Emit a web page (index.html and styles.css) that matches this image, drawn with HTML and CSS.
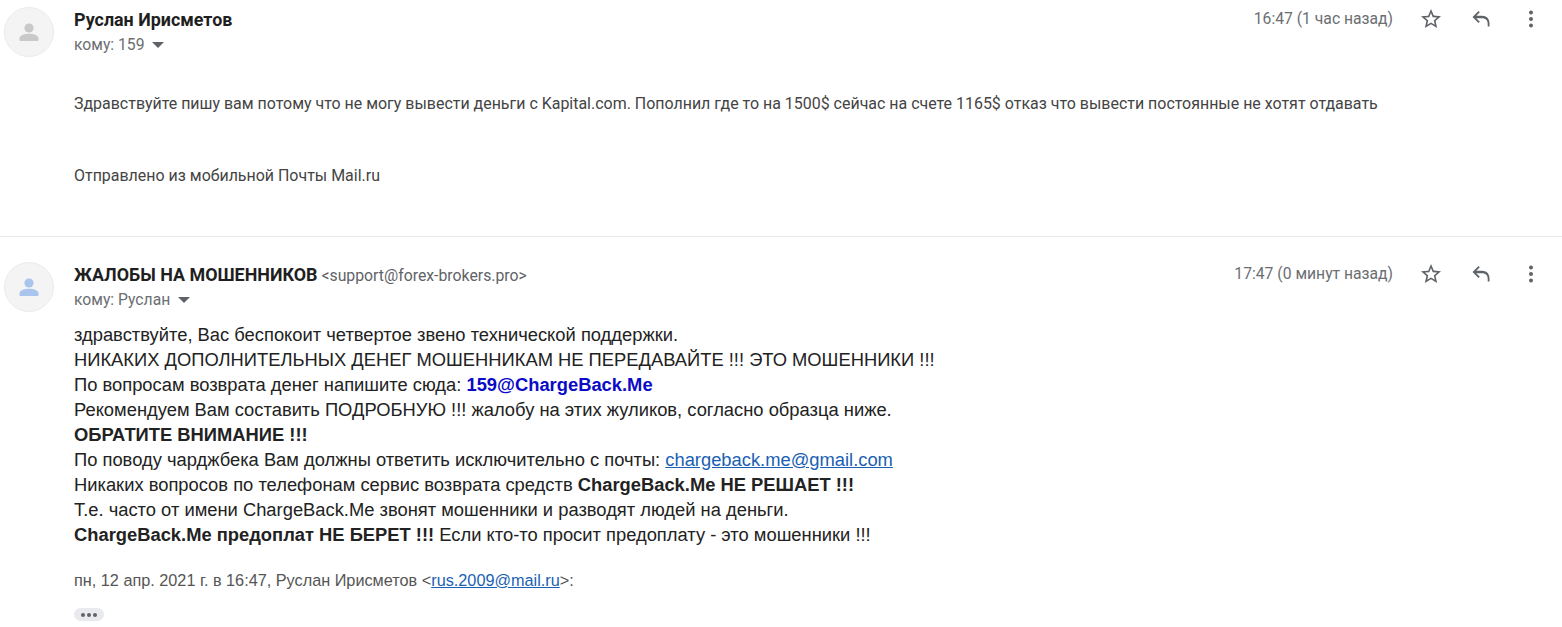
FILE: index.html
```html
<!DOCTYPE html>
<html lang="ru">
<head>
    <meta charset="UTF-8">
    <title>Почта</title>
    <link rel="stylesheet" href="styles.css">
</head>
<body>
    <div class="message first">
        <div class="avatar">
            <svg width="24" height="24" viewBox="0 0 24 24"><circle cx="12" cy="8" r="4.6"/><path d="M2.5 20v-1.6C2.500 15 8 13.800 12 13.800s9.500 1.200 9.500 4.600V20c0 .6-.4 1-1 1h-17c-.6 0-1-.4-1-1z"/></svg>
        </div>
        <div class="content">
            <div class="head">
                <div class="who">
                    <div class="from"><span class="name">Руслан Ирисметов</span></div>
                    <div class="to">кому: 159 <span class="caret"></span></div>
                </div>
                <div class="meta">
                    <span class="date">16:47 (1 час назад)</span>
                    <div class="actions">
                        <svg class="icon" width="24" height="24" viewBox="0 0 24 24"><path d="M22 9.240l-7.190-.62L12 2 9.190 8.630 2 9.240l5.460 4.730L5.820 21 12 17.270 18.180 21l-1.630-7.030L22 9.240zM12 15.400l-3.760 2.270 1-4.280-3.320-2.880 4.380-.38L12 6.100l1.710 4.040 4.380.38-3.320 2.880 1 4.280L12 15.400z"/></svg>
                        <svg class="icon" width="24" height="24" viewBox="0 0 24 24"><path d="M20.500 19.500h-1.800v-2.800c0-3.400-2.200-5.500-5.700-5.500H7.300l3.500 3.500-1.300 1.300L3.500 10l6-6 1.300 1.300-3.500 3.500H13c4.700 0 7.500 3 7.500 7.500z"/></svg>
                        <svg class="icon" width="24" height="24" viewBox="0 0 24 24"><circle cx="12" cy="5.500" r="2"/><circle cx="12" cy="12" r="2"/><circle cx="12" cy="18.500" r="2"/></svg>
                    </div>
                </div>
            </div>
            <div class="short-body">
                <p>Здравствуйте пишу вам потому что не могу вывести деньги с Kapital.com. Пополнил где то на 1500$ сейчас на счете 1165$ отказ что вывести постоянные не хотят отдавать</p>
                <p class="signature">Отправлено из мобильной Почты Mail.ru</p>
            </div>
        </div>
    </div>

    <div class="message second">
        <div class="avatar blue">
            <svg width="24" height="24" viewBox="0 0 24 24"><circle cx="12" cy="8" r="4.6"/><path d="M2.5 20v-1.6C2.500 15 8 13.800 12 13.800s9.500 1.200 9.500 4.600V20c0 .6-.4 1-1 1h-17c-.6 0-1-.4-1-1z"/></svg>
        </div>
        <div class="content">
            <div class="head">
                <div class="who">
                    <div class="from"><span class="name">ЖАЛОБЫ НА МОШЕННИКОВ</span> <span class="addr">&lt;support@forex-brokers.pro&gt;</span></div>
                    <div class="to">кому: Руслан <span class="caret"></span></div>
                </div>
                <div class="meta">
                    <span class="date">17:47 (0 минут назад)</span>
                    <div class="actions">
                        <svg class="icon" width="24" height="24" viewBox="0 0 24 24"><path d="M22 9.240l-7.190-.62L12 2 9.190 8.630 2 9.240l5.460 4.730L5.820 21 12 17.270 18.180 21l-1.630-7.030L22 9.240zM12 15.400l-3.760 2.270 1-4.280-3.320-2.880 4.380-.38L12 6.100l1.710 4.040 4.380.38-3.320 2.880 1 4.280L12 15.400z"/></svg>
                        <svg class="icon" width="24" height="24" viewBox="0 0 24 24"><path d="M20.500 19.500h-1.800v-2.800c0-3.400-2.200-5.500-5.700-5.500H7.300l3.500 3.500-1.300 1.300L3.500 10l6-6 1.300 1.300-3.500 3.500H13c4.700 0 7.500 3 7.500 7.500z"/></svg>
                        <svg class="icon" width="24" height="24" viewBox="0 0 24 24"><circle cx="12" cy="5.500" r="2"/><circle cx="12" cy="12" r="2"/><circle cx="12" cy="18.500" r="2"/></svg>
                    </div>
                </div>
            </div>
            <div class="long-body">
                <div>здравствуйте, Вас беспокоит четвертое звено технической поддержки.</div>
                <div>НИКАКИХ ДОПОЛНИТЕЛЬНЫХ ДЕНЕГ МОШЕННИКАМ НЕ ПЕРЕДАВАЙТЕ !!! ЭТО МОШЕННИКИ !!!</div>
                <div>По вопросам возврата денег напишите сюда: <b class="mail-blue">159@ChargeBack.Me</b></div>
                <div>Рекомендуем Вам составить ПОДРОБНУЮ !!! жалобу на этих жуликов, согласно образца ниже.</div>
                <div><b>ОБРАТИТЕ ВНИМАНИЕ !!!</b></div>
                <div>По поводу чарджбека Вам должны ответить исключительно с почты: <a href="#">chargeback.me@gmail.com</a></div>
                <div>Никаких вопросов по телефонам сервис возврата средств <b>ChargeBack.Me НЕ РЕШАЕТ !!!</b></div>
                <div>Т.е. часто от имени ChargeBack.Me звонят мошенники и разводят людей на деньги.</div>
                <div><b>ChargeBack.Me предоплат НЕ БЕРЕТ !!!</b> Если кто-то просит предоплату - это мошенники !!!</div>
            </div>
            <div class="quote-line">пн, 12 апр. 2021 г. в 16:47, Руслан Ирисметов &lt;<a href="#">rus.2009@mail.ru</a>&gt;:</div>
            <div class="more"><span></span><span></span><span></span></div>
        </div>
    </div>
</body>
</html>
```

FILE: styles.css
```css
html, body {
    height: 100%;
}

body {
    margin: 0;
    background: #fff;
    color: #222;
    font-family: "Liberation Sans", Arial, sans-serif;
    overflow: hidden;
}

.message {
    display: flex;
    padding-left: 4px;
    padding-right: 19px;
}

.first {
    height: 237px;
    padding-top: 7px;
    box-sizing: border-box;
    border-bottom: 1px solid #e8e8e8;
}

.second {
    padding-top: 25px;
}

.avatar {
    width: 50px;
    height: 50px;
    flex: none;
    border-radius: 50%;
    background: #f4f4f4;
    border: 1px solid #ebebeb;
    box-sizing: border-box;
    display: flex;
    align-items: center;
    justify-content: center;
    margin-right: 20px;
}

.avatar svg {
    fill: #c9c9c9;
}

.avatar.blue svg {
    fill: #a9c5ee;
}

.content {
    flex: 1;
    min-width: 0;
}

.head {
    display: flex;
    justify-content: space-between;
    align-items: flex-start;
    font-family: Roboto, sans-serif;
    margin-top: 3px;
}

.from {
    line-height: 20px;
    height: 20px;
}

.name {
    font-weight: 700;
    font-size: 17.900px;
    color: #1f1f1f;
}

.addr {
    font-size: 15.800px;
    color: #5f6368;
}

.to {
    font-size: 15.700px;
    line-height: 20px;
    margin-top: 5px;
    color: #6b6e72;
}

.caret {
    display: inline-block;
    width: 0;
    height: 0;
    margin-left: 4px;
    vertical-align: 2px;
    border-left: 6px solid transparent;
    border-right: 6px solid transparent;
    border-top: 6px solid #5f6368;
}

.meta {
    display: flex;
    align-items: flex-start;
}

.date {
    font-size: 15.700px;
    line-height: 24px;
    color: #6b6e72;
    margin-top: -3px;
}

.actions {
    display: flex;
    gap: 26px;
    margin-left: 26px;
    margin-top: -3px;
}

.icon {
    fill: #5f6368;
    display: block;
}

.short-body {
    margin-top: 39px;
    font-family: Roboto, sans-serif;
    font-size: 15.960px;
    line-height: 20px;
    color: #444;
}

.short-body p {
    margin: 0;
}

.signature {
    margin-top: 52px !important;
}

.long-body {
    margin-top: 12px;
    font-size: 18.350px;
    line-height: 25px;
    color: #222;
}

.mail-blue {
    color: #0a0ac8;
}

a {
    color: #1a5fb4;
}

.quote-line {
    margin-top: 23px;
    font-size: 16.250px;
    line-height: 20px;
    color: #555;
}

.more {
    display: flex;
    align-items: center;
    justify-content: center;
    gap: 2px;
    width: 30px;
    height: 13px;
    margin-top: 18px;
    border-radius: 7px;
    background: #e8eaed;
}

.more span {
    width: 4px;
    height: 4px;
    border-radius: 50%;
    background: #5f6368;
}
```
